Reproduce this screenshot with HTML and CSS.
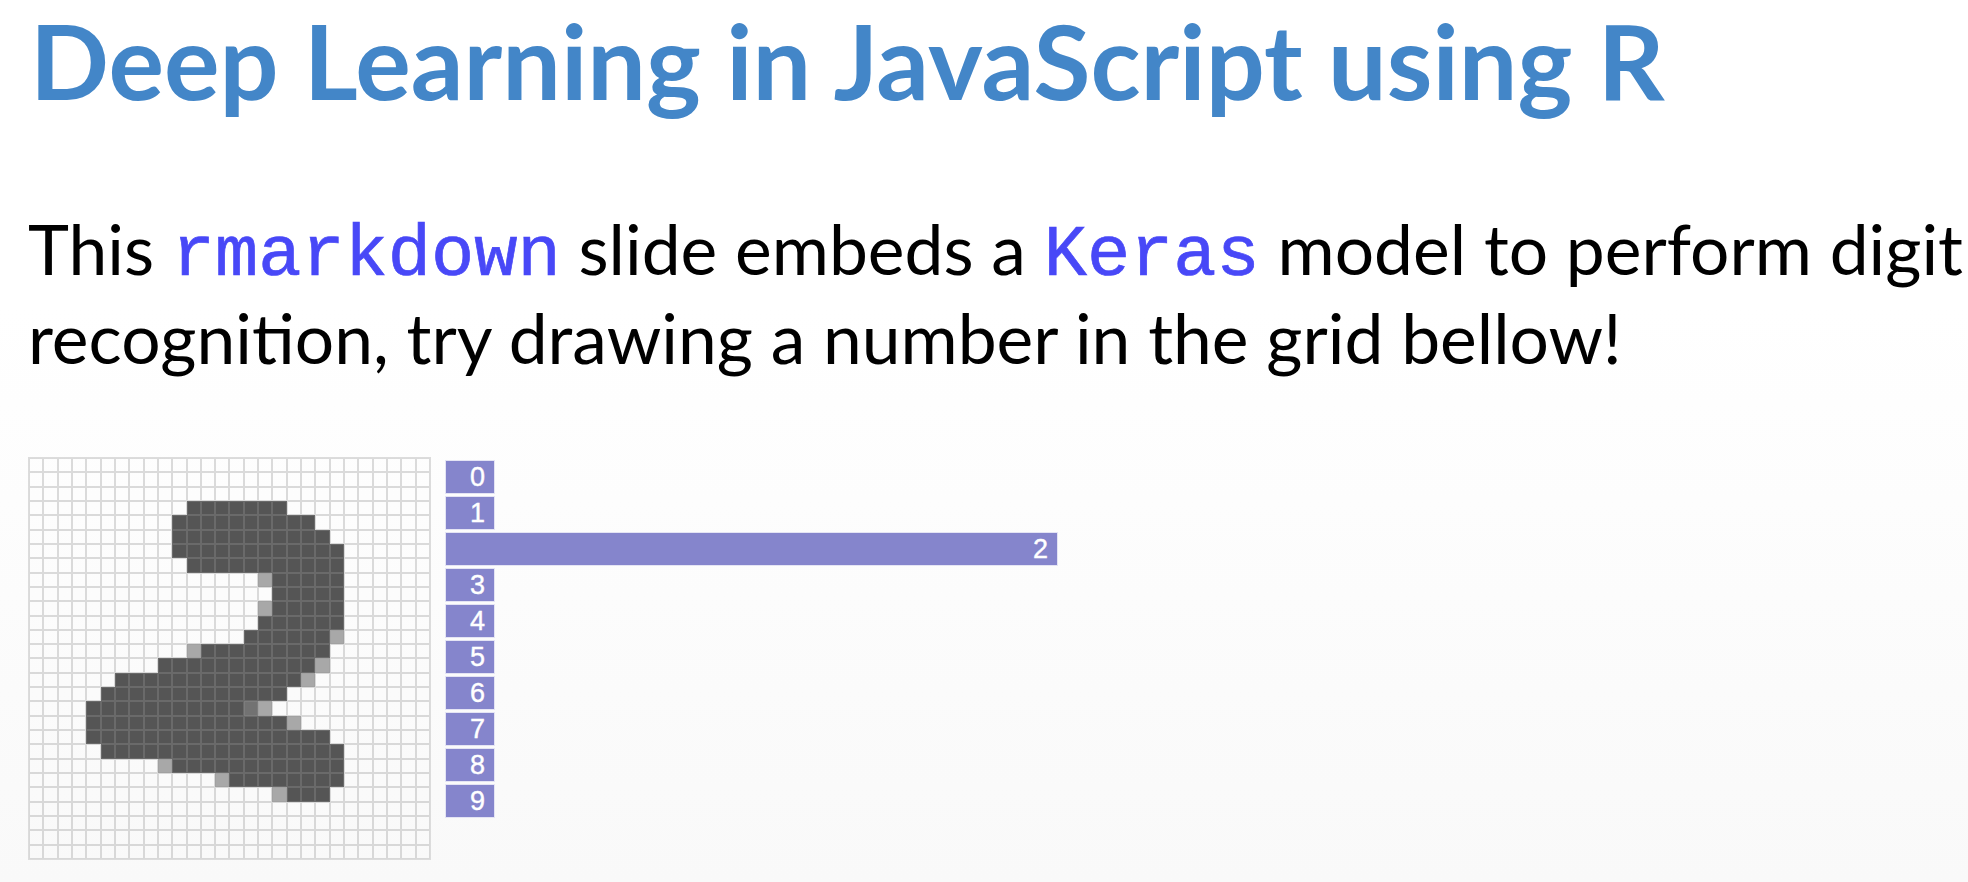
FILE: index.html
```html
<!DOCTYPE html>
<html lang="en">
<head>
<meta charset="utf-8">
<title>Deep Learning in JavaScript using R</title>
<link rel="stylesheet" href="styles.css">
</head>
<body>
<main class="slide">
  <h1 class="title">Deep Learning in JavaScript using R</h1>
  <p class="lead">This <code>rmarkdown</code> slide embeds a <code>Keras</code> model to perform digit recognition, try drawing a number in the grid bellow!</p>
  <section class="demo">
    <div class="pad" id="pad"></div>
    <div class="bars">
      <div class="bar">0</div>
      <div class="bar">1</div>
      <div class="bar bar-top" style="width: 613px">2</div>
      <div class="bar">3</div>
      <div class="bar">4</div>
      <div class="bar">5</div>
      <div class="bar">6</div>
      <div class="bar">7</div>
      <div class="bar">8</div>
      <div class="bar">9</div>
    </div>
  </section>
</main>
<script src="script.js"></script>
</body>
</html>
```
FILE: styles.css
```css
html, body {
  margin: 0;
  padding: 0;
}
body {
  width: 1968px;
  height: 882px;
  overflow: hidden;
  background: linear-gradient(to bottom, #ffffff 0%, #ffffff 35%, #f9f9f9 100%);
  font-family: Lato, "Open Sans", sans-serif;
  color: #000;
}
.slide {
  padding: 8px 0 0 28px;
}
.title {
  margin: 0 0 0 2px;
  font-size: 104px;
  line-height: 1;
  font-weight: 700;
  color: #4386c8;
  white-space: nowrap;
}
.lead {
  margin: 92px 0 0 0;
  font-size: 69.5px;
  line-height: 89px;
  width: 1940px;
}
.lead code {
  font-family: "Liberation Mono", "DejaVu Sans Mono", monospace;
  font-size: 72px;
  line-height: 1;
  color: #4848f7;
  -webkit-text-stroke: 0.7px #4848f7;
}
.demo {
  display: flex;
  align-items: flex-start;
  gap: 14px;
  margin-top: 75px;
}
.pad {
  display: grid;
  grid-template-columns: repeat(28, 1fr);
  grid-template-rows: repeat(28, 1fr);
  width: 401px;
  height: 401px;
  border: 1px solid #dcdcdc;
}
.pad i {
  display: block;
  border: 1px solid rgba(150, 150, 150, 0.33);
}
.pad i.d { background: #555555; }
.pad i.l { background: #a8a8a8; }
.pad i.m { background: #727272; }
.bars {
  display: flex;
  flex-direction: column;
  gap: 2px;
  margin-top: 3px;
}
.bar {
  box-sizing: border-box;
  width: 50px;
  height: 34px;
  border: 1px solid #e4e4f4;
  background: #8585cc;
  color: #fff;
  font-family: "Liberation Sans", Arial, sans-serif;
  font-size: 27px;
  line-height: 33px;
  text-align: right;
  padding-right: 9px;
  -webkit-text-stroke: 0.4px #fff;
}
```
FILE: script.js
```js
var rows = [
  "............................",
  "............................",
  "............................",
  "...........#######..........",
  "..........##########........",
  "..........###########.......",
  "..........############......",
  "...........###########......",
  "................l#####......",
  ".................#####......",
  "................l#####......",
  "................######......",
  "...............######l......",
  "...........l#########.......",
  ".........###########l.......",
  "......#############l........",
  ".....#############..........",
  "....###########ml...........",
  "....##############l.........",
  "....#################.......",
  ".....#################......",
  ".........l############......",
  ".............l########......",
  ".................l###.......",
  "............................",
  "............................",
  "............................",
  "............................"
];
var pad = document.getElementById("pad");
var cls = { "#": "d", "l": "l", "m": "m" };
rows.forEach(function (row) {
  for (var i = 0; i < row.length; i++) {
    var c = document.createElement("i");
    if (cls[row[i]]) c.className = cls[row[i]];
    pad.appendChild(c);
  }
});
```
